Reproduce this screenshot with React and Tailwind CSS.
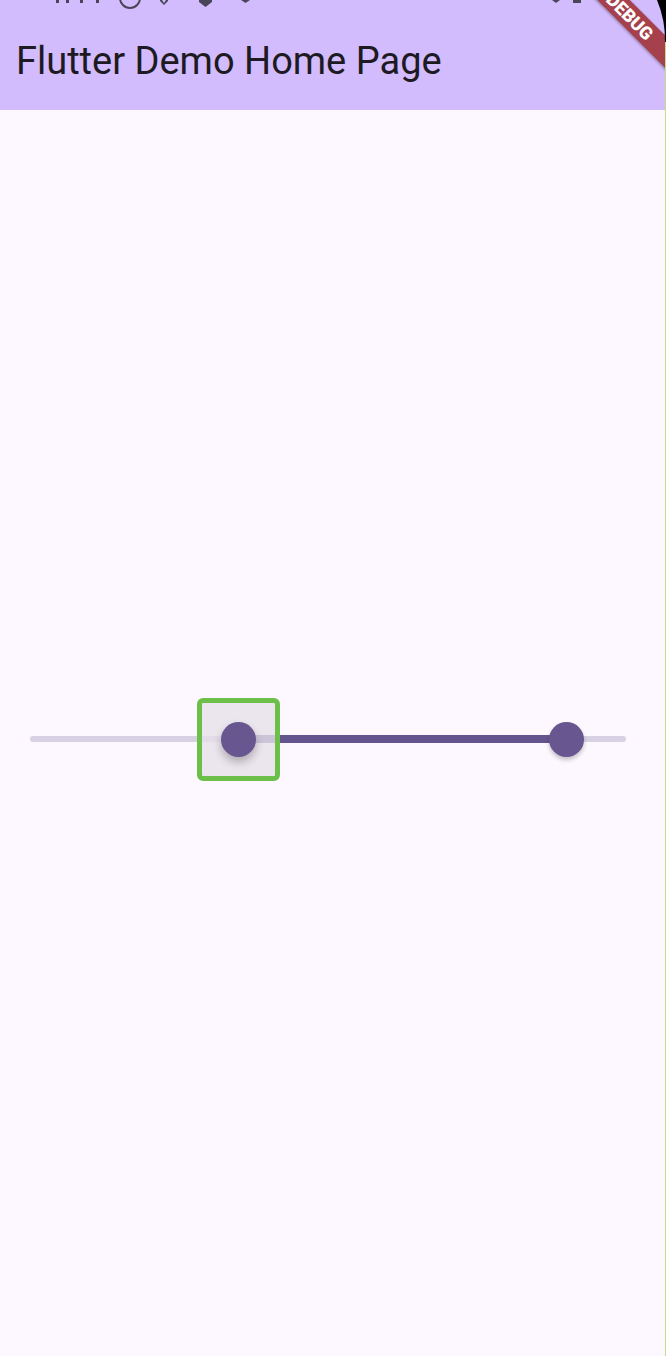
import React from 'react'

function StatusIcons() {
  // status bar sits mostly above the visible frame, only the bottoms show
  return (
    <svg className="absolute left-0 top-0" width="666" height="10" viewBox="0 0 666 10">
      <g fill="#4a4458">
        <rect x="56" y="0" width="3" height="3" />
        <rect x="66" y="0" width="3" height="3" />
        <rect x="80" y="0" width="3" height="3" />
        <rect x="96" y="0" width="3" height="3" />
        <path d="M160 0 L168 0 L168 1 L164 5 L160 1 Z" />
        <path d="M199 0 L212 0 L212 2 L205.5 7 L199 2 Z" />
        <path d="M241 0 L250 0 L245.5 3 Z" />
        <path d="M552 0 L560 0 L556 3 Z" />
        <rect x="573" y="0" width="8" height="3" />
      </g>
      <path d="M120 -2 A8 8 0 0 0 140 -2" fill="none" stroke="#4a4458" strokeWidth="2" />
      <path d="M162 0 L166 0 L164 3 Z" fill="#d2bcfd" />
    </svg>
  )
}

function DebugBanner() {
  return (
    <div className="absolute left-[530px] top-[5px] w-[200px] h-[23px] rotate-45 bg-[#a5404c] shadow-[0_1px_3px_rgba(0,0,0,0.35)] flex items-center justify-center">
      <span className="text-white text-[18px] font-black leading-none" style={{ fontFamily: 'Roboto, sans-serif' }}>
        DEBUG
      </span>
    </div>
  )
}

function ScreenCorner() {
  // rounded device corner in the top right
  return (
    <svg className="absolute right-0 top-0" width="20" height="50" viewBox="646 0 20 50">
      <path d="M657 0 L666 0 L666 42 L665 42 A104 104 0 0 0 657 0 Z" fill="#000" />
    </svg>
  )
}

function RangeSlider() {
  return (
    <div className="pl-[30px] pr-[39px]">
      <div className="relative h-[6px] rounded-full bg-[#d8d0e3]">
        {/* active segment */}
        <div className="absolute left-[34.9%] right-[9.9%] top-[-1px] h-[8px] bg-[#65558f]" />

        {/* focused start thumb */}
        <div className="absolute left-[167px] top-[-38px] w-[83px] h-[83px] rounded-[6px] border-[5px] border-[#6cc04a] bg-[#e6e0ea]/80 flex items-center justify-center">
          <div className="w-[35px] h-[35px] rounded-full bg-[#67568f] shadow-[0_5px_8px_rgba(0,0,0,0.25)]" />
        </div>

        {/* end thumb */}
        <div className="absolute left-[519px] top-[-14px] w-[35px] h-[35px] rounded-full bg-[#67568f] shadow-[0_3px_4px_rgba(0,0,0,0.22)]" />
      </div>
    </div>
  )
}

export default function App() {
  return (
    <div className="relative flex w-[666px] h-[1356px] bg-black overflow-hidden">
      <div className="relative w-[665px] h-full overflow-hidden bg-[#fdf7ff] flex flex-col">
        <header className="relative h-[110px] shrink-0 bg-[#d2bcfd] flex items-center pl-[16px] pt-[12px]">
          <StatusIcons />
          <h1 className="text-[38px] leading-none text-[#1d1a22]" style={{ fontFamily: 'Roboto, sans-serif' }}>
            Flutter Demo Home Page
          </h1>
        </header>
        <main className="flex-1 pt-[626px]">
          <RangeSlider />
        </main>
        <DebugBanner />
      </div>
      <div className="w-[1px] h-full bg-[#c8d88e]" />
      <ScreenCorner />
    </div>
  )
}
